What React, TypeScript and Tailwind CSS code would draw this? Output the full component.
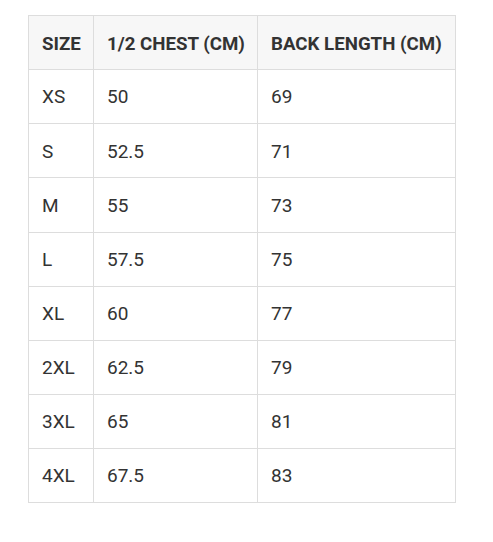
const rows = [
  ["XS", "50", "69"],
  ["S", "52.5", "71"],
  ["M", "55", "73"],
  ["L", "57.5", "75"],
  ["XL", "60", "77"],
  ["2XL", "62.5", "79"],
  ["3XL", "65", "81"],
  ["4XL", "67.5", "83"],
];

const App = () => {
  return (
    <div className="min-h-screen bg-white pt-[15px] pl-[28px] font-['Roboto',sans-serif] text-[#333]">
      <table className="table-fixed border-collapse text-[19px] w-[427px]">
        <colgroup>
          <col className="w-[65px]" />
          <col className="w-[164px]" />
          <col className="w-[198px]" />
        </colgroup>
        <thead>
          <tr className="h-[54.15px] bg-[#f7f7f7]">
            <th className="border border-[#dddddd] px-[13px] pt-[2px] text-left text-[18.7px] font-bold whitespace-nowrap">SIZE</th>
            <th className="border border-[#dddddd] px-[13px] pt-[2px] text-left text-[18.7px] font-bold whitespace-nowrap">1/2 CHEST (CM)</th>
            <th className="border border-[#dddddd] px-[13px] pt-[2px] text-left text-[18.7px] font-bold whitespace-nowrap">BACK LENGTH (CM)</th>
          </tr>
        </thead>
        <tbody>
          {rows.map((r) => (
            <tr key={r[0]} className="h-[54.15px]">
              {r.map((c, i) => (
                <td key={i} className="border border-[#dddddd] px-[13px] pt-[2px]">
                  {c}
                </td>
              ))}
            </tr>
          ))}
        </tbody>
      </table>
    </div>
  );
};

export default App;
